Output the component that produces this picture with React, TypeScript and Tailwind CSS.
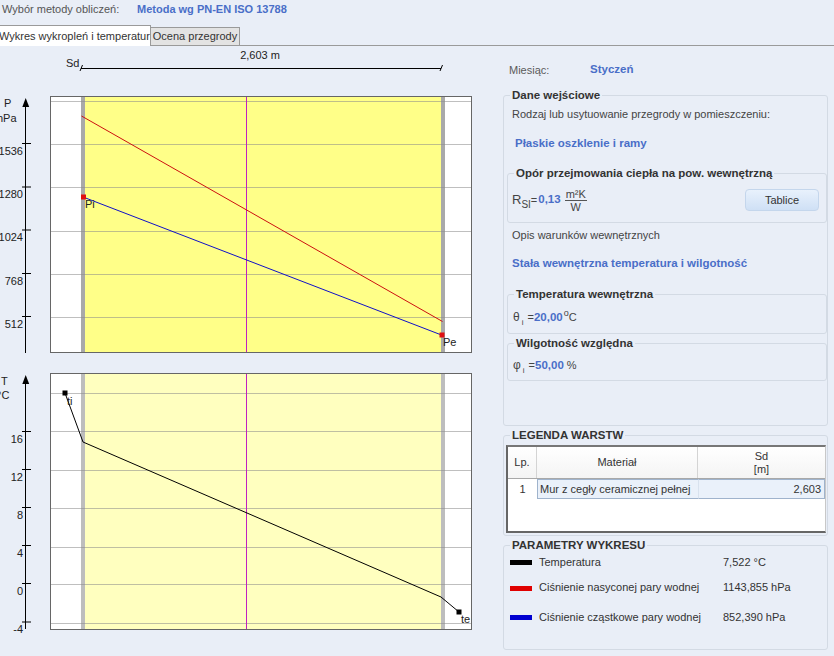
import React from 'react';

const BLUE = 'text-[#4a6ec8]';

const SdScale: React.FC = () => (
  <svg width={500} height={44} viewBox="0 46 500 44" className="block">
    <text x={66} y={67} fontSize={11} fill="#222">Sd</text>
    <text x={260} y={59} fontSize={11} fill="#222" textAnchor="middle">2,603 m</text>
    <line x1={81} y1={68.5} x2={441} y2={68.5} stroke="#000" />
    <line x1={80} y1={71} x2={82.5} y2={65} stroke="#000" />
    <line x1={440} y1={71} x2={442.5} y2={65} stroke="#000" />
  </svg>
);

const PressureChart: React.FC = () => {
  const grid = [101, 144, 187, 231, 274, 317];
  const ticks = [
    { y: 143.5, v: '1536' },
    { y: 187, v: '1280' },
    { y: 230, v: '1024' },
    { y: 273.5, v: '768' },
    { y: 316.5, v: '512' },
  ];
  return (
    <svg width={500} height={272} viewBox="0 90 500 272" className="block">
      <rect x={50.5} y={96.5} width={421} height={256} fill="#fff" stroke="#666" />
      <rect x={85} y={97} width={356} height={255} fill="#ffff88" />
      <rect x={81} y={97} width={4} height={255} fill="#a9a9a9" />
      <rect x={441} y={97} width={4} height={255} fill="#a9a9a9" />
      {grid.map(y => (
        <line key={y} x1={51} y1={y + 0.5} x2={471} y2={y + 0.5} stroke="#8a8a8a" strokeOpacity={0.55} />
      ))}
      <line x1={246.5} y1={97} x2={246.5} y2={352} stroke="#c020c0" />
      <line x1={81.5} y1={116} x2={442.5} y2={321.5} stroke="#cc1010" />
      <line x1={83} y1={197} x2={441.5} y2={335} stroke="#1010c8" />
      <rect x={81} y={194.5} width={5} height={5} fill="#e01010" />
      <rect x={439.5} y={332.5} width={5} height={5} fill="#e01010" />
      <text x={85} y={208} fontSize={11} fill="#222">Pi</text>
      <text x={443} y={346} fontSize={11} fill="#222">Pe</text>
      <line x1={25.5} y1={104} x2={25.5} y2={353} stroke="#000" />
      <polygon points="25.7,98 22.3,107 29.2,107" fill="#000" />
      {ticks.map(t => (
        <g key={t.v}>
          <line x1={22} y1={t.y} x2={31} y2={t.y} stroke="#000" />
          <text x={23} y={t.y + 11} fontSize={11} fill="#222" textAnchor="end">{t.v}</text>
        </g>
      ))}
      <text x={4} y={107} fontSize={11} fill="#222">P</text>
      <text x={-3} y={122} fontSize={11} fill="#222">hPa</text>
    </svg>
  );
};

const TempChart: React.FC = () => {
  const grid = [393, 431, 470, 508, 547, 584, 623];
  const ticks = [
    { y: 431.5, v: '16' },
    { y: 469.5, v: '12' },
    { y: 507.5, v: '8' },
    { y: 545.5, v: '4' },
    { y: 583.5, v: '0' },
    { y: 622, v: '-4' },
  ];
  return (
    <svg width={500} height={294} viewBox="0 362 500 294" className="block">
      <rect x={50.5} y={373.5} width={421} height={256} fill="#fff" stroke="#666" />
      <rect x={85} y={374} width={356} height={255} fill="#ffffbf" />
      <rect x={81} y={374} width={4} height={255} fill="#bdbdbd" />
      <rect x={441} y={374} width={4} height={255} fill="#bdbdbd" />
      {grid.map(y => (
        <line key={y} x1={51} y1={y + 0.5} x2={471} y2={y + 0.5} stroke="#8a8a8a" strokeOpacity={0.55} />
      ))}
      <line x1={246.5} y1={374} x2={246.5} y2={629} stroke="#c020c0" />
      <polyline points="65,393 83,442 441,597 459,612" fill="none" stroke="#000" />
      <rect x={62.5} y={390.5} width={5} height={5} fill="#000" />
      <rect x={456.5} y={609.5} width={5} height={5} fill="#000" />
      <text x={67} y={405} fontSize={11} fill="#222">ti</text>
      <text x={461} y={623} fontSize={11} fill="#222">te</text>
      <line x1={25.5} y1={382} x2={25.5} y2={629} stroke="#000" />
      <polygon points="25.7,375 22.3,384 29.2,384" fill="#000" />
      {ticks.map(t => (
        <g key={t.v}>
          <line x1={22} y1={t.y} x2={31} y2={t.y} stroke="#000" />
          <text x={23} y={t.y + 11} fontSize={11} fill="#222" textAnchor="end">{t.v}</text>
        </g>
      ))}
      <text x={1} y={385} fontSize={11} fill="#222">T</text>
      <text x={-3} y={399} fontSize={11} fill="#222">°C</text>
    </svg>
  );
};

const Group: React.FC<{ title: string; className?: string; children?: React.ReactNode }> = ({ title, className = '', children }) => (
  <fieldset className={`border border-[#d3dae4] rounded-[3px] ${className}`}>
    <legend className="ml-[6px] px-[2px] text-[11.5px] leading-[14px] font-bold text-[#333]">{title}</legend>
    {children}
  </fieldset>
);

const RightPanel: React.FC = () => (
  <div className="w-[334px] flex flex-col pt-[16px] pl-[3px]">
    <div className="flex items-center h-[16px] text-[11px] text-[#5a5a5a]">
      <span className="ml-[6px] w-[81px]">Miesiąc:</span>
      <span className={`font-bold text-[11.5px] ${BLUE}`}>Styczeń</span>
    </div>

    <Group title="Dane wejściowe" className="mt-[10px] w-[325px] h-[338px] flex flex-col">
      <div className="mt-[4px] ml-[8px] leading-[16px] text-[11px] text-[#444]">
        Rodzaj lub usytuowanie przegrody w pomieszczeniu:
      </div>
      <div className={`mt-[13px] ml-[11px] leading-[16px] font-bold text-[11.5px] ${BLUE}`}>Płaskie oszklenie i ramy</div>

      <Group title="Opór przejmowania ciepła na pow. wewnętrzną" className="mt-[15px] ml-[3px] w-[320px] pb-[11px]">
        <div className="mt-[9px] flex items-center h-[22px] pl-[4px] pr-[7px]">
          <span className="text-[13px] text-[#444]">R</span>
          <span className="text-[10px] text-[#444] mt-[8px]">SI</span>
          <span className="text-[11px] text-[#444]">=</span>
          <span className={`ml-[1px] font-bold text-[11.5px] ${BLUE}`}>0,13</span>
          <span className="ml-[4px] inline-flex flex-col items-center text-[11px] leading-[10px] text-[#444]">
            <span className="border-b border-[#555] px-[1px] pb-[1px]">m²K</span>
            <span className="pt-[1px]">W</span>
          </span>
          <button className="ml-auto w-[74px] h-[22px] rounded-[4px] border border-[#c4d6ec] bg-gradient-to-b from-[#e8f1fc] to-[#cfe0f5] text-[11px] text-[#333]">
            Tablice
          </button>
        </div>
      </Group>

      <div className="mt-[4px] ml-[8px] leading-[16px] text-[11px] text-[#444]">Opis warunków wewnętrznych</div>
      <div className={`mt-[12px] ml-[8px] leading-[16px] font-bold text-[11.5px] ${BLUE}`}>
        Stała wewnętrzna temperatura i wilgotność
      </div>

      <Group title="Temperatura wewnętrzna" className="mt-[16px] ml-[3px] w-[320px] pb-[9px]">
        <div className="mt-[7px] ml-[5px] flex items-baseline h-[16px] text-[11px] text-[#444]">
          <span className="text-[12px]">θ</span>
          <span className="text-[8px] relative top-[4px] ml-[2px]">i</span>
          <span className="ml-[4px]">=</span>
          <span className={`font-bold text-[11.5px] ${BLUE}`}>20,00</span>
          <span className="text-[9px] relative -top-[5px] ml-[1px]">o</span>
          <span>C</span>
        </div>
      </Group>

      <Group title="Wilgotność względna" className="mt-[2px] ml-[3px] w-[320px] pb-[8px]">
        <div className="mt-[6px] ml-[5px] flex items-baseline h-[16px] text-[11px] text-[#444]">
          <span className="text-[12px]">φ</span>
          <span className="text-[8px] relative top-[4px] ml-[2px]">i</span>
          <span className="ml-[4px]">=</span>
          <span className={`font-bold text-[11.5px] ${BLUE}`}>50,00</span>
          <span className="ml-[3px]">%</span>
        </div>
      </Group>
    </Group>

    <Group title="LEGENDA WARSTW" className="mt-[2px] w-[325px] h-[108px]">
      <div className="mt-[3px] ml-[2px] w-[320px] h-[88px] border-t-2 border-l-2 border-b-2 border-r border-t-[#777] border-l-[#666] border-b-[#666] border-r-[#c8c8c8] bg-white text-[11px] text-[#333]">
        <div className="grid grid-cols-[29px_161px_1fr] h-[32px] border-b border-[#a8a8a8] bg-gradient-to-b from-white to-[#f4f4f4]">
          <div className="flex items-center justify-center border-r border-[#d4d4d4]">Lp.</div>
          <div className="flex items-center justify-center border-r border-[#d4d4d4]">Materiał</div>
          <div className="flex flex-col items-center justify-center leading-[13px]">
            <span>Sd</span>
            <span>[m]</span>
          </div>
        </div>
        <div className="grid grid-cols-[29px_161px_1fr] h-[20px]">
          <div className="flex items-center justify-center">1</div>
          <div className="flex items-center pl-[2px] bg-[#eaf1fa] border border-r-0 border-[#9fb3cc] whitespace-nowrap">
            Mur z cegły ceramicznej pełnej
          </div>
          <div className="flex items-center justify-end pr-[3px] bg-[#eaf1fa] border border-[#9fb3cc] border-l-[#d8e2ee]">2,603</div>
        </div>
      </div>
    </Group>

    <Group title="PARAMETRY WYKRESU" className="mt-[2px] w-[325px] h-[112px] text-[11px] text-[#333]">
      <div className="mt-[2px] flex items-center h-[16px]">
        <span className="ml-[6px] w-[22px] h-[5px] bg-black" />
        <span className="ml-[7px] w-[184px]">Temperatura</span>
        <span>7,522 °C</span>
      </div>
      <div className="mt-[9px] flex items-center h-[16px]">
        <span className="ml-[6px] w-[22px] h-[5px] bg-[#e00000] mt-[3px]" />
        <span className="ml-[7px] w-[184px]">Ciśnienie nasyconej pary wodnej</span>
        <span>1143,855 hPa</span>
      </div>
      <div className="mt-[14px] flex items-center h-[16px]">
        <span className="ml-[6px] w-[22px] h-[5px] bg-[#0000d0]" />
        <span className="ml-[7px] w-[184px]">Ciśnienie cząstkowe pary wodnej</span>
        <span>852,390 hPa</span>
      </div>
    </Group>
  </div>
);

const App: React.FC = () => {
  return (
    <div className="w-[834px] h-[656px] overflow-hidden bg-[#e9eef7] font-['Liberation_Sans',Arial,sans-serif] text-[11px] text-[#333] flex flex-col">
      {/* header */}
      <div className="h-[25px] flex items-start pt-[2px] leading-[14px]">
        <span className="ml-[2px] w-[135px] text-[11px] text-[#555]">Wybór metody obliczeń:</span>
        <span className={`font-bold text-[11px] ${BLUE}`}>Metoda wg PN-EN ISO 13788</span>
      </div>

      {/* tabs */}
      <div className="h-[21px] flex items-end">
        <div className="h-[21px] w-[152px] bg-white border-t border-r border-[#9a9a9a] flex items-center -ml-[1px] whitespace-nowrap text-[11px]">
          Wykres wykropleń i temperatur
        </div>
        <div className="h-[19px] w-[89px] bg-[#e3e3e3] border border-l-0 border-[#9a9a9a] flex items-center justify-center whitespace-nowrap text-[11px]">
          Ocena przegrody
        </div>
        <div className="flex-1 h-full border-b border-[#9a9a9a]" />
      </div>

      {/* content */}
      <div className="flex flex-1">
        <div className="w-[500px] flex flex-col">
          <SdScale />
          <PressureChart />
          <TempChart />
        </div>
        <RightPanel />
      </div>
    </div>
  );
};

export default App;
